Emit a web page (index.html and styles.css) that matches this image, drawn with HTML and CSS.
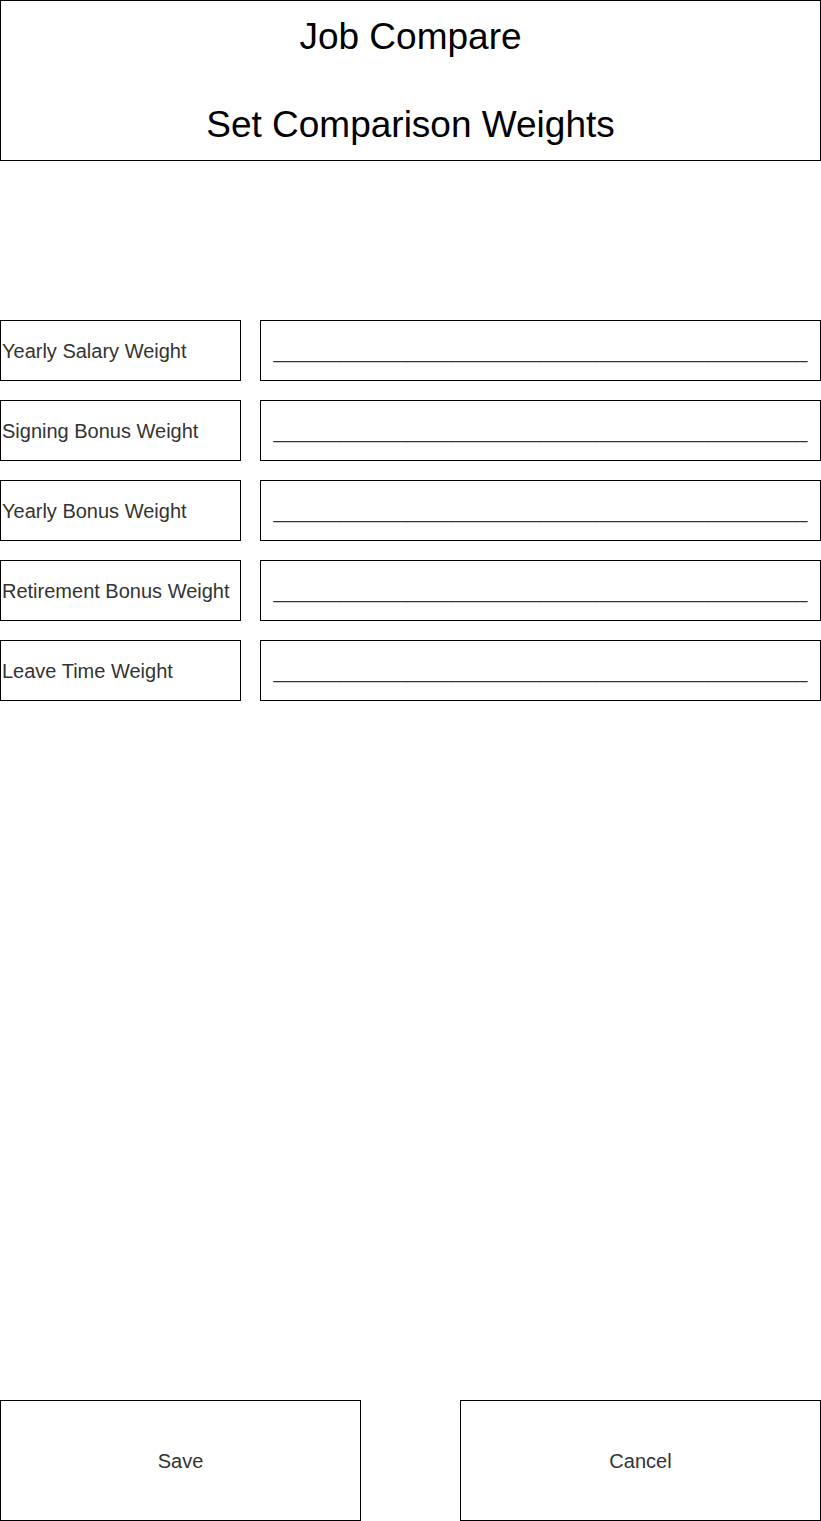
FILE: index.html
```html
<!DOCTYPE html>
<html>
<head>
<meta charset="utf-8">
<link rel="stylesheet" href="styles.css">
</head>
<body>
<div class="page">
  <header class="header">
    <div class="title">Job Compare</div>
    <div class="title sub">Set Comparison Weights</div>
  </header>
  <section class="form">
    <div class="row"><div class="label">Yearly Salary Weight</div><div class="field">________________________________________________</div></div>
    <div class="row"><div class="label">Signing Bonus Weight</div><div class="field">________________________________________________</div></div>
    <div class="row"><div class="label">Yearly Bonus Weight</div><div class="field">________________________________________________</div></div>
    <div class="row"><div class="label">Retirement Bonus Weight</div><div class="field">________________________________________________</div></div>
    <div class="row"><div class="label">Leave Time Weight</div><div class="field">________________________________________________</div></div>
  </section>
  <footer class="actions">
    <div class="btn">Save</div>
    <div class="btn">Cancel</div>
  </footer>
</div>
</body>
</html>
```
FILE: styles.css
```css
html, body {
  margin: 0;
  padding: 0;
  background: #fff;
}
.page {
  width: 821px;
  height: 1521px;
  display: flex;
  flex-direction: column;
  box-sizing: border-box;
}
.header {
  box-sizing: border-box;
  height: 161px;
  border: 1px solid #000;
  display: flex;
  flex-direction: column;
  align-items: center;
  font-family: "Liberation Sans", Arial, sans-serif;
  color: #000;
}
.title {
  font-size: 37px;
  line-height: 44px;
  margin-top: 14px;
}
.title.sub {
  margin-top: 44px;
}
.form {
  margin-top: 159px;
  display: flex;
  flex-direction: column;
  gap: 19px;
}
.row {
  display: flex;
  gap: 19px;
  height: 61px;
}
.label, .field {
  box-sizing: border-box;
  border: 1px solid #000;
  display: flex;
  align-items: center;
  font-family: "Liberation Sans", Arial, sans-serif;
  font-size: 20px;
  color: #333;
}
.label {
  width: 241px;
  padding-left: 1px;
  padding-top: 2px;
  white-space: nowrap;
}
.field {
  flex: 1;
  justify-content: center;
  overflow: hidden;
  white-space: nowrap;
  padding-top: 2px;
}
.actions {
  margin-top: auto;
  display: flex;
  justify-content: space-between;
  height: 121px;
}
.btn {
  box-sizing: border-box;
  width: 361px;
  border: 1px solid #000;
  display: flex;
  align-items: center;
  justify-content: center;
  padding-top: 2px;
  font-family: "Liberation Sans", Arial, sans-serif;
  font-size: 20px;
  color: #333;
}
```
